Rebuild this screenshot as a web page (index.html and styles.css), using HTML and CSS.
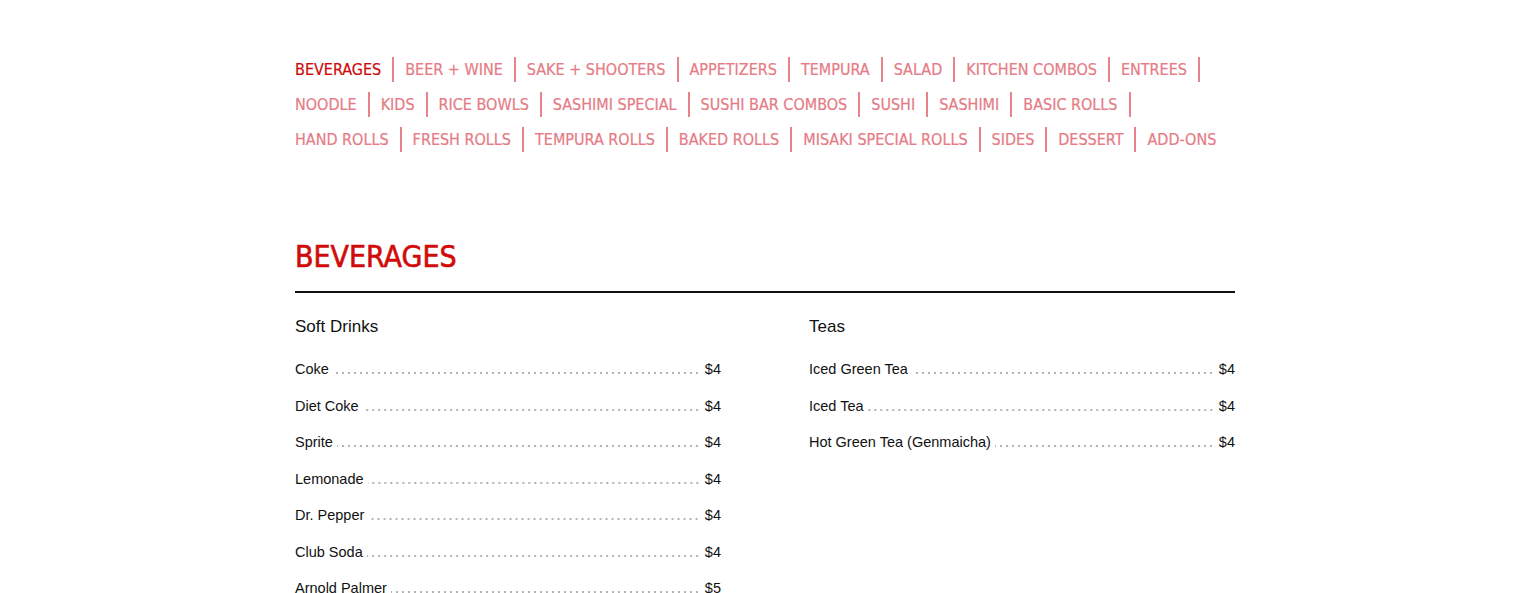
FILE: index.html
```html
<!DOCTYPE html>
<html lang="en">
<head>
<meta charset="utf-8">
<title>Menu</title>
<link rel="stylesheet" href="styles.css">
</head>
<body>
<div class="page">
  <nav class="menu-nav">
    <ul>
      <li class="active">BEVERAGES</li>
      <li>BEER + WINE</li>
      <li>SAKE + SHOOTERS</li>
      <li>APPETIZERS</li>
      <li>TEMPURA</li>
      <li>SALAD</li>
      <li>KITCHEN COMBOS</li>
      <li>ENTREES</li>
      <li>NOODLE</li>
      <li>KIDS</li>
      <li>RICE BOWLS</li>
      <li>SASHIMI SPECIAL</li>
      <li>SUSHI BAR COMBOS</li>
      <li>SUSHI</li>
      <li>SASHIMI</li>
      <li>BASIC ROLLS</li>
      <li>HAND ROLLS</li>
      <li>FRESH ROLLS</li>
      <li>TEMPURA ROLLS</li>
      <li>BAKED ROLLS</li>
      <li>MISAKI SPECIAL ROLLS</li>
      <li>SIDES</li>
      <li>DESSERT</li>
      <li>ADD-ONS</li>
    </ul>
  </nav>

  <section class="section">
    <h2 class="section-title">BEVERAGES</h2>
    <div class="columns">
      <div class="group">
        <h3 class="group-title">Soft Drinks</h3>
        <ul class="items">
          <li><span class="name">Coke</span><span class="dots"></span><span class="price">$4</span></li>
          <li><span class="name">Diet Coke</span><span class="dots"></span><span class="price">$4</span></li>
          <li><span class="name">Sprite</span><span class="dots"></span><span class="price">$4</span></li>
          <li><span class="name">Lemonade</span><span class="dots"></span><span class="price">$4</span></li>
          <li><span class="name">Dr. Pepper</span><span class="dots"></span><span class="price">$4</span></li>
          <li><span class="name">Club Soda</span><span class="dots"></span><span class="price">$4</span></li>
          <li><span class="name">Arnold Palmer</span><span class="dots"></span><span class="price">$5</span></li>
        </ul>
      </div>
      <div class="group">
        <h3 class="group-title">Teas</h3>
        <ul class="items">
          <li><span class="name">Iced Green Tea</span><span class="dots"></span><span class="price">$4</span></li>
          <li><span class="name">Iced Tea</span><span class="dots"></span><span class="price">$4</span></li>
          <li><span class="name">Hot Green Tea (Genmaicha)</span><span class="dots"></span><span class="price">$4</span></li>
        </ul>
      </div>
    </div>
  </section>
</div>
</body>
</html>
```
FILE: styles.css
```css
html, body {
  margin: 0;
  padding: 0;
  background: #ffffff;
}

body {
  font-family: "Liberation Sans", Arial, sans-serif;
  color: #111111;
}

.page {
  width: 940px;
  margin: 0 auto;
  padding-top: 57px;
}

.menu-nav ul {
  list-style: none;
  margin: 0;
  padding: 0;
  display: flex;
  flex-wrap: wrap;
  row-gap: 10px;
}

.menu-nav li {
  height: 25px;
  line-height: 26px;
  font-family: "DejaVu Sans Condensed", "Liberation Sans", sans-serif;
  font-size: 16px;
  color: #e57b85;
  -webkit-text-stroke: 0.2px currentColor;
  padding-right: 11px;
  margin-right: 11px;
  border-right: 2px solid #e8838c;
  white-space: nowrap;
}

.menu-nav li:last-child {
  border-right: none;
  padding-right: 0;
  margin-right: 0;
}

.menu-nav li.active {
  color: #cc0a0a;
}

.section {
  margin-top: 87px;
}

.section-title {
  margin: 0;
  font-family: "DejaVu Sans Condensed", "Liberation Sans", sans-serif;
  font-size: 30px;
  line-height: 36px;
  font-weight: normal;
  color: #d10a0a;
  -webkit-text-stroke: 0.6px currentColor;
  padding-bottom: 16px;
  border-bottom: 2px solid #111111;
}

.columns {
  display: grid;
  grid-template-columns: 1fr 1fr;
  column-gap: 88px;
  padding-top: 22px;
}

.group-title {
  margin: 0 0 19px;
  font-size: 17px;
  line-height: 24px;
  font-weight: normal;
  color: #111111;
}

.items {
  list-style: none;
  margin: 0;
  padding: 0;
}

.items li {
  display: flex;
  align-items: baseline;
  height: 36.5px;
  line-height: 22px;
  font-size: 14.5px;
  color: #111111;
}

.items .dots {
  flex: 1;
  height: 2px;
  margin: 0 5px 0 4px;
  background-image: radial-gradient(circle, #8a8a8a 0.6px, transparent 0.9px);
  background-size: 6px 2px;
  background-repeat: repeat-x;
  background-position: right bottom;
}
```
